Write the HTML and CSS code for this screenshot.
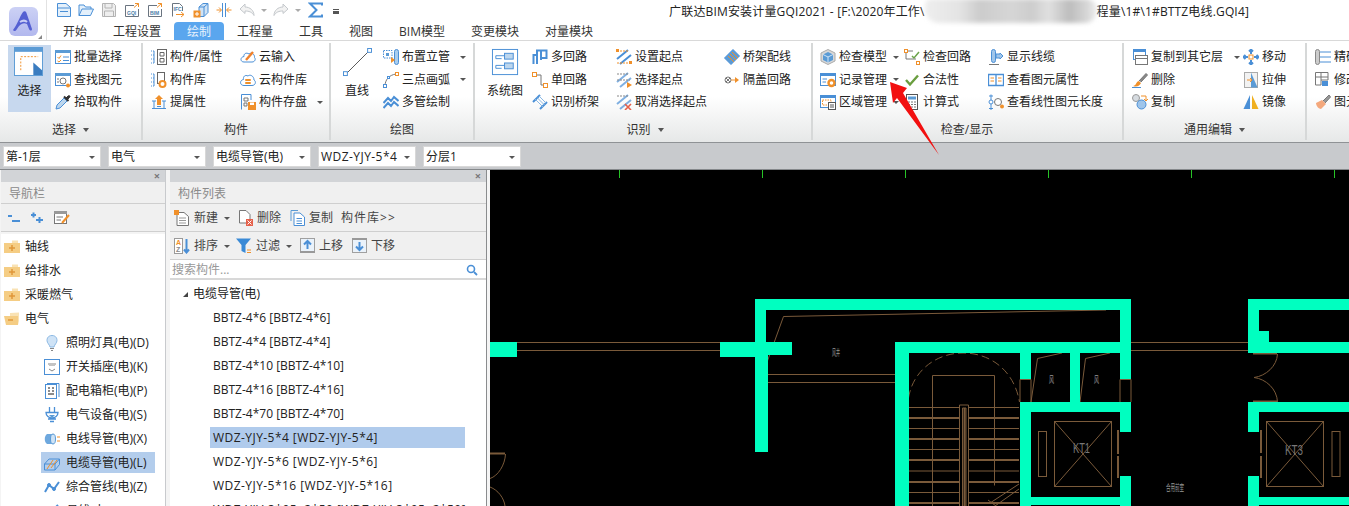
FILE: index.html
```html
<!DOCTYPE html>
<html lang="zh-CN">
<head>
<meta charset="utf-8">
<title>广联达BIM安装计量GQI2021</title>
<link rel="stylesheet" href="styles.css">
</head>
<body>
<header class="top">
  <div class="logo-box">
    <div class="logo"><svg viewBox="0 0 28 28" width="28" height="28"><path d="M4 23 C8 18 11 9 14 5 C15 4 17 4 17.500 6 L23 22 C23 24 21 24 20 22 L18 17 C14 15 11 17 8 22 C7 24 5 25 4 23Z" fill="#5560d2"/><path d="M11 15 C14 13 16 13 18 15" stroke="#c9cdf5" stroke-width="2" fill="none"/></svg></div>
    <i class="grip"></i>
  </div>
  <div class="top-right">
    <div class="qat">
      <svg class="ic q" viewBox="0 0 16 16"><path d="M1.500 1.500H10L14.500 5.500V14.500H1.500Z" fill="#e4f0fb"/><path d="M1.500 6H14.500M4 9.500H12"/></svg>
      <svg class="ic q q-open" viewBox="0 0 16 16"><path d="M1 13.500V3H6L7.500 5H13V7" fill="#e4f0fb"/><path d="M1 13.500L4 7H15.500L12.500 13.500Z" fill="#e4f0fb"/></svg>
      <svg class="ic q q-gap gr" viewBox="0 0 16 16"><path d="M1.500 1.500H12.500L14.500 3.500V14.500H1.500Z" fill="#eee"/><path d="M4 1.500V6H11V1.500M3.500 14.500V9H12.500V14.500"/></svg>
      <svg class="ic q q-gap dk" viewBox="0 0 16 16"><path d="M1.500 3.500H10M1.500 3.500V14.500H14.500V7"/><path class="o" d="M10 5.500L14.500 1.500M11 1.500H14.500V5"/><text x="3" y="12.500" class="tiny">GQI</text></svg>
      <svg class="ic q q-gap dk" viewBox="0 0 16 16"><path d="M1.500 3.500H10M1.500 3.500V14.500H14.500V7"/><path class="o" d="M10 5.500L14.500 1.500M11 1.500H14.500V5"/><text x="3" y="12.500" class="tiny">BIM</text></svg>
      <svg class="ic q q-gap2 dk" viewBox="0 0 16 16"><path d="M2.500 14.500V1.500H9.500L12.500 4.500V9"/><text x="3.500" y="9" class="tiny">IFC</text><path class="o" d="M6 12.500H14M11 10L14 12.500L11 15"/></svg>
      <svg class="ic q q-gap2" viewBox="0 0 16 16"><path d="M6 5L10 1.500H15V10.500L11 14.500H6Z" fill="#cfe3f6"/><path d="M6 5H11V14.500M11 5L15 1.500"/><rect class="of" x="0.500" y="8.500" width="7" height="7"/><path d="M2 12H6M4 10V14" stroke="#fff"/></svg>
      <svg class="ic q q-gap2" viewBox="0 0 16 16"><path d="M9.500 1V15M6.500 1V15" /><path class="o" d="M0.500 8H5M3 5.500L5.500 8L3 10.500M15.500 8H11M13 5.500L10.500 8L13 10.500"/></svg>
      <svg class="ic q q-gap2 lg" viewBox="0 0 16 16"><path d="M6 2L1 7L6 11.500V9C10 9 13 10 15 13.500C15 8.500 11 5 6 5Z" fill="#f2f2f2"/></svg>
      <i class="car car-q"></i>
      <svg class="ic q lg q-redo" viewBox="0 0 16 16"><path d="M10 2L15 7L10 11.500V9C6 9 3 10 1 13.500C1 8.500 5 5 10 5Z" fill="#f2f2f2"/></svg>
      <i class="car car-q"></i>
      <svg class="ic q q-sig" viewBox="0 0 16 16"><path class="fat" d="M14 3.500V1.500H2L8.500 8L2 14.500H14V12.500"/></svg>
      <i class="qmore"></i>
      <h1 class="title">广联达BIM安装计量GQI2021 - [F:\2020年工作\<span class="blur"></span>程量\1#\1#BTTZ电线.GQI4]</h1>
    </div>
    <nav class="tabs">
      <a class="tab">开始</a><a class="tab">工程设置</a><a class="tab tab-on">绘制</a><a class="tab">工程量</a><a class="tab">工具</a><a class="tab">视图</a><a class="tab">BIM模型</a><a class="tab">变更模块</a><a class="tab">对量模块</a>
    </nav>
  </div>
</header>

<section class="ribbon">
  <div class="group g1">
    <div class="gbody">
      <div class="big big-on">
        <svg class="ic big-ic" viewBox="0 0 30 30"><rect x="0.500" y="0.500" width="29" height="29" fill="#fff" stroke="#5b9bd5"/><rect x="0" y="0" width="30" height="5" fill="#5b9bd5" stroke="none"/><path class="o" d="M7 24V10H25" stroke-dasharray="2 1.500"/><path d="M20 16L29 24V29H20Z" fill="#3a7cc0" stroke="none"/></svg>
        <span>选择</span>
      </div>
      <div class="col">
        <div class="it"><svg class="ic" viewBox="0 0 16 16"><rect x="0.500" y="1.500" width="15" height="13" fill="#fff"/><rect x="0" y="1" width="16" height="3" fill="#5b9bd5" stroke="none"/><path class="o" d="M2.500 8L4 9.500L6 6.500M2.500 12L4 13L6 11"/><path d="M8 8H14M8 11.500H14"/></svg><span>批量选择</span></div>
        <div class="it"><svg class="ic" viewBox="0 0 16 16"><rect x="0.500" y="1.500" width="15" height="12" fill="#fff"/><rect x="0" y="1" width="16" height="3" fill="#5b9bd5" stroke="none"/><circle cx="8" cy="9" r="3" stroke="#777"/><circle class="of" cx="13" cy="13.500" r="2"/><path d="M2 7H4M2 10H4" stroke="#777"/></svg><span>查找图元</span></div>
        <div class="it"><svg class="ic" viewBox="0 0 16 16"><path d="M1 15L2 11L9 4L12 7L5 14Z" fill="#bcd6ee"/><path d="M9 2.500L13.500 7" stroke="#333" stroke-width="2"/><path d="M11 4L13 2C15 1 15.500 2.500 14.500 3.500L12.500 5.500" fill="#333" stroke="#333"/></svg><span>拾取构件</span></div>
      </div>
    </div>
    <div class="glabel">选择<i class="car car-l"></i></div>
  </div>

  <div class="group g2">
    <div class="gbody">
      <div class="col c89">
        <div class="it"><svg class="ic" viewBox="0 0 16 16"><path d="M0 2H4M0 6H4M0 10H4M0 14H4" stroke-dasharray="1 1"/><path d="M3 2V14"/><rect x="6.500" y="0.500" width="9" height="15" stroke="#666"/><path d="M9 3.500H13V7H9ZM9 9.500H13V13H9Z" stroke="#666"/></svg><span>构件/属性</span></div>
        <div class="it"><svg class="ic" viewBox="0 0 16 16"><path d="M0 2H4M0 6H4M0 10H4M0 14H4" stroke-dasharray="1 1"/><path d="M3 2V14"/><rect x="6.500" y="0.500" width="7" height="11" stroke="#666"/><circle cx="11.500" cy="12" r="3" stroke="#f0902a" stroke-width="2" fill="#fff"/></svg><span>构件库</span></div>
        <div class="it"><svg class="ic" viewBox="0 0 16 16"><path class="of" d="M8 1L12 5H10V11H6V5H4Z"/><path d="M1 7H5M11 7H15M1 14.500H15M3 7V14.500M13 7V14.500M6 12.500H10"/></svg><span>提属性</span></div>
      </div>
      <div class="col">
        <div class="it"><svg class="ic" viewBox="0 0 16 16"><path d="M4 13H12C15 13 16 10 14.500 8.500C15 5 11 3 9 5C6 3 3.500 5 4 7.500C0 8 0 13 4 13Z"/><path class="o2" d="M6 11L13 3"/></svg><span>云输入</span></div>
        <div class="it"><svg class="ic" viewBox="0 0 16 16"><path d="M4 13.500H12C15.500 13.500 16.500 9.500 14 8C14 4 10 2 8 4C5 2.500 3 4.500 3.500 7.500C-0.500 8 -0.500 13.500 4 13.500Z"/><rect class="of" x="5" y="7" width="6" height="2" rx="1"/><rect class="of" x="5" y="10" width="6" height="2" rx="1"/></svg><span>云构件库</span></div>
        <div class="it"><svg class="ic" viewBox="0 0 16 16"><path d="M1.500 15.500V0.500H11V6"/><path d="M4 4H8V7H4ZM4 9H7V12H4Z" stroke="#777"/><rect class="of" x="8" y="8" width="8" height="8"/><rect x="10" y="8.500" width="4" height="2.500" fill="#fff" stroke="none"/></svg><span>构件存盘</span><i class="car car-m"></i></div>
      </div>
    </div>
    <div class="glabel">构件</div>
  </div>

  <div class="group g3">
    <div class="gbody">
      <div class="big">
        <svg class="ic big-ic" viewBox="0 0 30 30"><path d="M3 27L27 3" stroke="#555"/><rect x="0.500" y="24.500" width="4" height="4" fill="#fff"/><rect x="25.500" y="0.500" width="4" height="4" fill="#fff"/></svg>
        <span>直线</span>
      </div>
      <div class="col">
        <div class="it"><svg class="ic" viewBox="0 0 16 16"><path d="M0.500 1.500H9V9H0.500Z" stroke-dasharray="1.500 1"/><rect x="3" y="4" width="3" height="3" stroke="none" fill="#5b9bd5"/><rect x="11.500" y="0.500" width="4" height="15" rx="2" fill="#a9cdee"/><path class="of" d="M8 8L12 11L8 14Z"/></svg><span>布置立管</span><i class="car car-m"></i></div>
        <div class="it"><svg class="ic" viewBox="0 0 16 16"><path d="M2 14C2 8 6 3 13 2" stroke="#777"/><rect x="0.500" y="12.500" width="3" height="3" fill="#fff"/><rect class="bo" x="12.500" y="0.500" width="3" height="3" fill="#fff"/><rect x="4.500" y="4.500" width="2" height="2" fill="#fff"/></svg><span>三点画弧</span><i class="car car-m"></i></div>
        <div class="it"><svg class="ic fat" viewBox="0 0 16 16"><path d="M0.500 9L5 4L8 7L11 3L15.500 7M0.500 14L5 9L8 12L11 8L15.500 12"/></svg><span>多管绘制</span></div>
      </div>
    </div>
    <div class="glabel">绘图</div>
  </div>

  <div class="group g4">
    <div class="gbody">
      <div class="big big-sys">
        <svg class="ic big-ic" viewBox="0 0 30 30"><rect x="0.500" y="0.500" width="26" height="26" transform="translate(1 1)" fill="#fff"/><rect x="14" y="5.500" width="9" height="6" fill="#bcd6ee"/><rect x="14" y="15.500" width="9" height="6" fill="#bcd6ee"/><path d="M5 8H14M5 18H14M5 8V11H11M5 18V21H11"/></svg>
        <span>系统图</span>
      </div>
      <div class="col c84">
        <div class="it"><svg class="ic" viewBox="0 0 16 16"><path class="fat" d="M1.500 15V6H5V15M5 9V1.500H9V11M9 5V1.500H14.500V9H10"/></svg><span>多回路</span></div>
        <div class="it"><svg class="ic" viewBox="0 0 16 16"><path d="M3 3H9V13H13" stroke="#777"/><rect class="bo" x="0.500" y="0.500" width="4" height="4" fill="#fff"/><rect class="bo" x="11.500" y="11.500" width="4" height="4" fill="#fff"/></svg><span>单回路</span></div>
        <div class="it"><svg class="ic" viewBox="0 0 16 16"><path class="fat" d="M1 8L8 1M8 15L15 8"/><path d="M3 5L11 13M5 3.500L12.500 11M7 2L14 9" stroke="#8ab8e4"/></svg><span>识别桥架</span></div>
      </div>
      <div class="col c108">
        <div class="it"><svg class="ic" viewBox="0 0 16 16"><path class="fat" d="M1 10L12 1M4 15L15 6"/><path d="M1 2H12M1 14H13" class="o" stroke-dasharray="2 1"/><rect class="of" x="0" y="0" width="3" height="3"/><rect class="of" x="13" y="12" width="3" height="3"/></svg><span>设置起点</span></div>
        <div class="it"><svg class="ic" viewBox="0 0 16 16"><path class="fat" d="M1 10L12 1M4 15L15 6" stroke-opacity=".7"/><path d="M1 2H12M1 8L14 8" stroke="#888" stroke-dasharray="2 1"/><path class="of" d="M11 10L16 13L11 16Z"/></svg><span>选择起点</span></div>
        <div class="it"><svg class="ic" viewBox="0 0 16 16"><path class="fat" d="M1 10L12 1M4 15L15 6" stroke-opacity=".7"/><path d="M1 2H12" stroke="#888" stroke-dasharray="2 1"/><path d="M9 10L15 16M15 10L9 16" stroke="#e5604a" stroke-width="1.600"/></svg><span>取消选择起点</span></div>
      </div>
      <div class="col">
        <div class="it"><svg class="ic" viewBox="0 0 16 16"><path d="M0.500 9L9 0.500L15.500 7L7 15.500Z" fill="#5b9bd5"/><path class="o" d="M4 7L10 13M6 5L12 11M8 3L14 9"/></svg><span>桥架配线</span></div>
        <div class="it"><svg class="ic" viewBox="0 0 16 16"><circle cx="4" cy="8" r="3" stroke="#777"/><path d="M2 6L6 10M6 6L2 10" stroke="#777"/><path class="o" d="M7 8H11"/><path class="of" d="M11 5L15 8L11 11Z"/></svg><span>隔盖回路</span></div>
      </div>
    </div>
    <div class="glabel">识别<i class="car car-l"></i></div>
  </div>

  <div class="group g5">
    <div class="gbody">
      <div class="col c84">
        <div class="it"><svg class="ic" viewBox="0 0 16 16"><path d="M8 0.500L15 4V12L8 15.500L1 12V4Z" fill="#d8d8d8" stroke="#aaa"/><path d="M8 3L13 5.500V11L8 13.500L3 11V5.500Z" fill="#5b9bd5" stroke="none"/><path d="M3 5.500L8 8L13 5.500M8 8V13.500" stroke="#cfe3f6"/></svg><span>检查模型</span><i class="car car-s"></i></div>
        <div class="it"><svg class="ic" viewBox="0 0 16 16"><rect x="0.500" y="1.500" width="15" height="12" fill="#fff"/><rect x="0" y="1" width="16" height="3" fill="#4a8fd6" stroke="none"/><path d="M2.500 7H7M2.500 10H6"/><circle cx="11.500" cy="11" r="3" stroke="#f0902a" stroke-width="2.400" fill="#fff"/></svg><span>记录管理</span><i class="car car-s"></i></div>
        <div class="it"><svg class="ic" viewBox="0 0 16 16"><rect x="0.500" y="1.500" width="15" height="12" fill="#fff"/><rect x="0" y="1" width="16" height="3" fill="#4a8fd6" stroke="none"/><path class="o" d="M2.500 6H11V11H2.500Z" stroke-dasharray="1.500 1"/><rect x="8.500" y="8.500" width="7" height="7" fill="#fff" stroke="#555"/><path d="M10 11H14M10 13H14" stroke="#555"/></svg><span>区域管理</span><i class="car car-s"></i></div>
      </div>
      <div class="col c84">
        <div class="it"><svg class="ic" viewBox="0 0 16 16"><rect class="bo" x="0.500" y="0.500" width="3" height="3"/><rect class="bo" x="12.500" y="12.500" width="3" height="3"/><path d="M4 2H9M2 4V10H12" stroke="#777"/><path d="M8 7L10 9L15 3" stroke="#6ba34a" stroke-width="1.500"/></svg><span>检查回路</span></div>
        <div class="it"><svg class="ic" viewBox="0 0 16 16"><path d="M2 8L6 12.500L14 3.500" stroke="#6a9e3f" stroke-width="2.400"/></svg><span>合法性</span></div>
        <div class="it"><svg class="ic" viewBox="0 0 16 16"><rect x="2.500" y="0.500" width="11" height="15" stroke="#555" fill="#fff"/><rect x="4" y="2.500" width="8" height="3" fill="#5b9bd5" stroke="none"/><path d="M4 8H12M4 10.500H12M4 13H12" stroke="#777" stroke-dasharray="2 1"/></svg><span>计算式</span></div>
      </div>
      <div class="col">
        <div class="it"><svg class="ic" viewBox="0 0 16 16"><path d="M1 15.500H11" stroke="#777"/><rect x="3.500" y="0.500" width="4" height="13" rx="2" fill="#9fc5ea"/><path d="M8 5H12V4L15 7L12 10V9H8Z" fill="#9fc5ea"/></svg><span>显示线缆</span></div>
        <div class="it"><svg class="ic" viewBox="0 0 16 16"><path d="M0.500 2.500H15.500V13.500H0.500ZM8 2.500V13.500" stroke-width="1.300" fill="#fff"/><path class="o" d="M2.500 6H6M2.500 9H6M10 6H13.500M10 9H13.500"/></svg><span>查看图元属性</span></div>
        <div class="it"><svg class="ic" viewBox="0 0 16 16"><path d="M3 0.500V16M1 2H5M1 14.500H5"/><circle cx="3" cy="8" r="2" fill="#fff"/><circle cx="10" cy="8" r="3.500" stroke="#777" fill="#fff"/><circle class="of" cx="14" cy="12.500" r="2"/></svg><span>查看线性图元长度</span></div>
      </div>
    </div>
    <div class="glabel">检查/显示</div>
  </div>

  <div class="group g6">
    <div class="gbody">
      <div class="col c111">
        <div class="it"><svg class="ic" viewBox="0 0 16 16"><rect x="1.500" y="0.500" width="12" height="10" fill="#fff"/><rect x="1" y="0" width="13" height="3" fill="#4a8fd6" stroke="none"/><rect x="3.500" y="6.500" width="12" height="9" fill="#fff" stroke="#777"/><path d="M3.500 9.500H15.500" stroke="#777"/></svg><span>复制到其它层</span><i class="car car-c"></i></div>
        <div class="it"><svg class="ic" viewBox="0 0 16 16"><path d="M7 9L14 1.500L15.500 3L9 10" fill="#888" stroke="#777"/><path class="of" d="M1 14C4 14 4 10 6.500 9L9 11C8 13.500 5 15.500 1 14Z"/><path d="M0 15.500H9" stroke-width="1"/></svg><span>删除</span></div>
        <div class="it"><svg class="ic" viewBox="0 0 16 16"><circle cx="4" cy="4" r="3.500" fill="#d6dbe0" stroke="#999"/><circle cx="9.500" cy="10.500" r="4.500" fill="#9fc5ea"/><path d="M9 2H14V6M12 5L14 7L16 5" stroke="#f0902a"/></svg><span>复制</span></div>
      </div>
      <div class="col">
        <div class="it"><svg class="ic" viewBox="0 0 16 16"><rect class="bo" x="6" y="6" width="4" height="4"/><path class="fat" d="M8 5V1M6 2.500L8 0.500L10 2.500M8 11V15M6 13.500L8 15.500L10 13.500M5 8H1M2.500 6L0.500 8L2.500 10M11 8H15M13.500 6L15.500 8L13.500 10"/></svg><span>移动</span></div>
        <div class="it"><svg class="ic" viewBox="0 0 16 16"><rect x="1.500" y="0.500" width="13" height="15" stroke="#aaa" fill="#f2f2f2"/><path d="M8 0.500L14.500 15.500H8Z" fill="#5b9bd5" stroke="none"/><path class="o" d="M4 8H9M7 6L9 8L7 10"/></svg><span>拉伸</span></div>
        <div class="it"><svg class="ic" viewBox="0 0 16 16"><path d="M7 1V15H0.500Z" fill="#4a8fd6" stroke="none"/><path d="M9 1V15H15.500Z" fill="#f0b020" stroke="none"/></svg><span>镜像</span></div>
      </div>
    </div>
    <div class="glabel">通用编辑<i class="car car-l"></i></div>
  </div>

  <div class="group g7">
    <div class="gbody">
      <div class="col">
        <div class="it"><svg class="ic" viewBox="0 0 16 16"><rect x="0.500" y="0.500" width="4" height="15" rx="2" fill="#ccc" stroke="#888"/><path d="M5 3H16M5 8H16M5 13H16"/></svg><span>精确布置</span></div>
        <div class="it"><svg class="ic" viewBox="0 0 16 16"><path d="M0.500 0.500H13V8H6V13H0.500ZM0.500 5H13M6 0.500V8" stroke="#777"/><rect x="7" y="9" width="6" height="5" fill="#4a8fd6" stroke="none"/></svg><span>修改构件</span></div>
        <div class="it"><svg class="ic" viewBox="0 0 16 16"><path d="M8 7L14 1L15.500 3L10 9" fill="#999" stroke="#777"/><path d="M1 9L7 6L11 10L6 15C4 15 1 12 1 9Z" fill="#f4a87c" stroke="none"/></svg><span>图元属性</span></div>
      </div>
    </div>
    <div class="glabel"></div>
  </div>
</section>

<section class="selbar">
  <div class="sel"><span>第-1层</span><i class="car"></i></div>
  <div class="sel"><span>电气</span><i class="car"></i></div>
  <div class="sel"><span>电缆导管(电)</span><i class="car"></i></div>
  <div class="sel"><span class="wd">WDZ-YJY-5*4</span><i class="car"></i></div>
  <div class="sel"><span>分层1</span><i class="car"></i></div>
</section>

<main class="main">
  <aside class="panel nav">
    <div class="pclose"><span>×</span></div>
    <div class="phead">导航栏</div>
    <div class="ptool nav-tool">
      <svg class="ic i12" viewBox="0 0 12 12"><path class="fat" d="M0 4H4M4 9H12"/></svg>
      <svg class="ic i12" viewBox="0 0 12 12"><path class="fat" d="M0 3H5M2.500 0.500V5.500M5 8H12M8.500 5V11"/></svg>
      <svg class="ic" viewBox="0 0 16 16"><rect x="0.500" y="1.500" width="12" height="12" fill="#fff" stroke="#777"/><rect x="0" y="1" width="13" height="3" fill="#999" stroke="none"/><path d="M2.500 7H9M2.500 10H7" stroke="#777"/><path d="M8 13L15 5" stroke="#f0902a" stroke-width="2"/></svg>
    </div>
    <ul class="tree">
      <li class="fold"><svg class="ic f" viewBox="0 0 16 14"><path d="M0 3H16V13H0Z" fill="#f5cd84" stroke="none"/><path d="M8 0.500H14V3H8Z" fill="#f9e2b4" stroke="none"/><path d="M5 8H11M8 5V11" stroke="#e0973a" stroke-width="1.500"/></svg>轴线</li>
      <li class="fold"><svg class="ic f" viewBox="0 0 16 14"><path d="M0 3H16V13H0Z" fill="#f5cd84" stroke="none"/><path d="M8 0.500H14V3H8Z" fill="#f9e2b4" stroke="none"/><path d="M5 8H11M8 5V11" stroke="#e0973a" stroke-width="1.500"/></svg>给排水</li>
      <li class="fold"><svg class="ic f" viewBox="0 0 16 14"><path d="M0 3H16V13H0Z" fill="#f5cd84" stroke="none"/><path d="M8 0.500H14V3H8Z" fill="#f9e2b4" stroke="none"/><path d="M5 8H11M8 5V11" stroke="#e0973a" stroke-width="1.500"/></svg>采暖燃气</li>
      <li class="fold"><svg class="ic f" viewBox="0 0 16 14"><path d="M0 4H14V13H2Z" fill="#f5cd84" stroke="none"/><path d="M6 1L15 0.500V9L14 13V4H6Z" fill="#f9e2b4" stroke="none"/><path d="M4 8H9" stroke="#e0973a" stroke-width="1.500"/></svg>电气</li>
      <li class="sub"><svg class="ic" viewBox="0 0 16 16"><path d="M8 0.500C12 0.500 13 3.500 13 5.500C13 8 10.500 9.500 10 12H6C5.500 9.500 3 8 3 5.500C3 3.500 4 0.500 8 0.500Z" fill="#cfe3f6" stroke="#8ab8e4"/><path d="M6 13.500H10M7 15.500H9" stroke="#888"/></svg>照明灯具(电)(D)</li>
      <li class="sub"><svg class="ic" viewBox="0 0 16 16"><rect x="0.500" y="0.500" width="15" height="15" fill="#fff"/><path d="M6 4V7M8 4V7M10 4V7M4 5H5M11 5H12M5 10L8 12L11 10" stroke="#888"/></svg>开关插座(电)(K)</li>
      <li class="sub"><svg class="ic" viewBox="0 0 16 16"><rect x="1.500" y="1.500" width="11" height="14" fill="#fff"/><path d="M3 0.500H15V14"/><path d="M4 5H6M8 5H10M4 8H6M8 8H10M4 11H10" stroke="#666" stroke-width="1.500"/></svg>配电箱柜(电)(P)</li>
      <li class="sub"><svg class="ic" viewBox="0 0 16 16"><path d="M5.500 0V5M10.500 0V5M2 5.500H14C14 9 11 11 8 11C5 11 2 9 2 5.500ZM4 12H12M6 14.500H10" stroke-width="1.300"/><path d="M5 8H11L8 11Z" fill="#5b9bd5" stroke="none"/></svg>电气设备(电)(S)</li>
      <li class="sub"><svg class="ic" viewBox="0 0 16 16"><path d="M3 3H9C11 5 11 11 9 13H3C0 11 0 5 3 3Z" fill="#6ea8de" stroke="none"/><ellipse cx="9" cy="8" rx="2.500" ry="5" fill="#cfe3f6" stroke="#5b9bd5"/><path class="o" d="M13 6H16M13 10H16"/></svg>电线导管(电)(X)</li>
      <li class="sub sub-on"><svg class="ic" viewBox="0 0 16 16"><path d="M0.500 9H11V15H0.500ZM0.500 9L5 4H15.500L11 9M15.500 4V9.500L11 15"/><path class="o" d="M3 14L9 5M7 13L13 5"/></svg>电缆导管(电)(L)</li>
      <li class="sub"><svg class="ic" viewBox="0 0 16 16"><path class="fat" d="M1 13L5 6L10 10L15 3"/><circle cx="5" cy="6" r="1.500" fill="#4a8fd6"/><circle cx="10" cy="10" r="1.500" fill="#4a8fd6"/></svg>综合管线(电)(Z)</li>
      <li class="sub"><svg class="ic" viewBox="0 0 16 16"><path d="M2 14L14 2" class="fat"/></svg>母线(电)(M)</li>
    </ul>
  </aside>

  <aside class="panel list">
    <div class="pclose"><span>×</span></div>
    <div class="phead">构件列表</div>
    <div class="ptool">
      <span class="tb tb-wide"><svg class="ic" viewBox="0 0 16 16"><path d="M3 2.500H10L14.500 6.500V15.500H3Z" fill="#fff" stroke="#777"/><path d="M5 8H12M5 10.500H12M5 13H12" stroke="#999"/><rect class="of" x="0" y="0" width="5" height="5"/></svg>新建<i class="car"></i></span>
      <span class="tb tb-m9"><svg class="ic" viewBox="0 0 16 16"><path d="M1.500 0.500H8L12 4.500V13H1.500Z" fill="#fff" stroke="#777"/><rect x="8" y="9" width="7" height="7" fill="#e5604a" stroke="none"/><path d="M9.500 10.500L13.500 14.500M13.500 10.500L9.500 14.500" stroke="#fff"/></svg>删除</span>
      <span class="tb"><svg class="ic" viewBox="0 0 16 16"><path d="M1 11V0.500H8" stroke="#5b9bd5"/><path d="M4 3H10L14.500 7V15.500H4Z" fill="#fff"/><path d="M6.500 8.500H12M6.500 11H12M6.500 13.500H12"/></svg>复制</span>
      <span class="tb tb-lib">构件库&gt;&gt;</span>
    </div>
    <div class="ptool">
      <span class="tb tb-wide tb-m6"><svg class="ic" viewBox="0 0 16 16"><rect x="0.500" y="0.500" width="8" height="15" fill="#fff" stroke="#999"/><text x="2" y="7" class="tiny2 torange">A</text><text x="2" y="14" class="tiny2">Z</text><path class="fat" d="M12.500 1V14M10 11.500L12.500 14.500L15 11.500"/></svg>排序<i class="car"></i></span>
      <span class="tb tb-wide"><svg class="ic" viewBox="0 0 16 16"><path d="M0 0.500H15L9.500 7V15L5.500 13V7Z" fill="#3a8ad6" stroke="none"/><path class="o" d="M11 12H15M11 14.500H15"/></svg>过滤<i class="car"></i></span>
      <span class="tb tb-m9"><svg class="ic" viewBox="0 0 16 16"><rect x="0.500" y="0.500" width="14" height="14" fill="#eaf2fa" stroke="#a0a0a0"/><rect x="0" y="13" width="15" height="2" fill="#999" stroke="none"/><path class="fat" d="M7.500 11V3M4 6.500L7.500 3L11 6.500"/></svg>上移</span>
      <span class="tb"><svg class="ic" viewBox="0 0 16 16"><rect x="0.500" y="0.500" width="14" height="14" fill="#eaf2fa" stroke="#a0a0a0"/><rect x="0" y="0" width="15" height="2" fill="#999" stroke="none"/><path class="fat" d="M7.500 4V12M4 8.500L7.500 12L11 8.500"/></svg>下移</span>
    </div>
    <div class="search"><span>搜索构件...</span><svg class="ic i12" viewBox="0 0 12 12"><circle cx="5" cy="5" r="3.500" stroke-width="1.600"/><path d="M8 8L11 11" stroke-width="1.800"/></svg></div>
    <ul class="items">
      <li class="root"><i class="tri"></i>电缆导管(电)</li>
      <li>BBTZ-4*6 [BBTZ-4*6]</li>
      <li>BBTZ-4*4 [BBTZ-4*4]</li>
      <li>BBTZ-4*10 [BBTZ-4*10]</li>
      <li>BBTZ-4*16 [BBTZ-4*16]</li>
      <li>BBTZ-4*70 [BBTZ-4*70]</li>
      <li class="on wd">WDZ-YJY-5*4 [WDZ-YJY-5*4]</li>
      <li class="wd">WDZ-YJY-5*6 [WDZ-YJY-5*6]</li>
      <li class="wd">WDZ-YJY-5*16 [WDZ-YJY-5*16]</li>
      <li class="wd">WDZ-YJV-3*95+2*50 [WDZ-YJV-3*95+2*50]</li>
    </ul>
  </aside>

  <div class="cad">
    <svg class="cad-svg" viewBox="490 170 859 336" width="859" height="336">
      <g class="tick">
        <path d="M619.500 170V178M762.500 170V178M905.500 170V178M1048.500 170V178M1191.500 170V178M1334.500 170V178"/>
      </g>
      <g class="ln">
        <path d="M517 342.500H720M517 350.500H720M1131 342.500H1248M1131 350.500H1248M768 374.500H895M768 382.500H895"/>
        <path d="M766 365L783.500 316.500L1106 310"/>
        <path d="M1031 402L1037.500 358.500L1062 353M1080 402L1085.500 358.500L1110 353"/>
        <path d="M1020 379.500H1031V402M1120 379.500H1131V402M1020 379.500V402M1120 379.500V402"/>
        <rect x="1054.500" y="421.500" width="57" height="65"/>
        <path d="M1054.500 421.500L1111.500 486.500M1111.500 421.500L1054.500 486.500"/>
        <rect x="1038.500" y="431.500" width="8" height="45"/>
        <rect x="1266.500" y="421.500" width="57" height="65"/>
        <path d="M1266.500 421.500L1323.500 486.500M1323.500 421.500L1266.500 486.500"/>
        <rect x="1332" y="431.500" width="8" height="45"/>
        <path class="thick" d="M1118 430V454M1118 456V478M1261 430V453M1261 456V478M1253 353.500H1277M1253 401.500H1277M490 453.500H505"/>
        <path d="M1277.500 354C1277 366 1266 376 1254 377.500C1266 379 1277 389 1277.500 402"/>
        <path d="M505.500 454C505 465 498 476 490 478.500M490 487C498 490 504 498 505 506"/>
        <path d="M932.500 506V375.500H994.500V485.500"/>
        <path d="M908 407.500H959M969 407.500H1019M908 428.500H959M969 428.500H1019M908 449.500H959M969 449.500H1019M908 471H959M969 471H1019M908 492.500H959M969 492.500H1019"/>
        <path class="thick" d="M908 418H959M969 418H1019M908 439H959M969 439H1019M908 460H959M969 460H1019M908 482H959M969 482H1019M908 503H959M969 503H1019"/>
        <path d="M959.500 506V405H968.500V506M962.500 506V408H966V506"/>
        <path class="thick" d="M964.500 408V506"/>
        <path d="M990 503L1019 484M995 506L1019 489M988 500L996 506"/>
        <path class="dash" d="M908.500 398C913 370 937 353 963 353C990 353 1014 370 1019.500 402"/>
      </g>
      <g class="wall">
        <rect x="490" y="342" width="27" height="15"/>
        <rect x="720" y="342" width="36" height="15"/>
        <rect x="755" y="299" width="376" height="11"/>
        <rect x="755" y="299" width="11" height="60"/>
        <rect x="755" y="355" width="13" height="97"/>
        <rect x="755" y="342" width="37" height="13"/>
        <rect x="895" y="342" width="236" height="11"/>
        <rect x="895" y="342" width="14" height="164"/>
        <rect x="1020" y="342" width="11" height="37"/>
        <rect x="1070" y="342" width="10" height="61"/>
        <rect x="1120" y="299" width="11" height="80"/>
        <rect x="1020" y="402" width="111" height="10"/>
        <rect x="1020" y="402" width="11" height="104"/>
        <rect x="1120" y="402" width="11" height="30"/>
        <rect x="1120" y="476" width="11" height="30"/>
        <rect x="1020" y="497" width="111" height="8"/>
        <rect x="1248" y="299" width="101" height="11"/>
        <rect x="1248" y="299" width="11" height="54"/>
        <rect x="1259" y="331" width="10" height="12"/>
        <rect x="1248" y="342" width="101" height="11"/>
        <rect x="1248" y="402" width="101" height="10"/>
        <rect x="1248" y="402" width="11" height="30"/>
        <rect x="1248" y="476" width="11" height="30"/>
        <rect x="1259" y="497" width="90" height="8"/>
      </g>
      <g class="lbl">
        <text x="1073" y="453" class="kt" textLength="17" lengthAdjust="spacingAndGlyphs">KT1</text>
        <text x="1285" y="455" class="kt" textLength="18" lengthAdjust="spacingAndGlyphs">KT3</text>
        <text x="832" y="356" textLength="8" lengthAdjust="spacingAndGlyphs">风井</text>
        <text x="1049" y="383" textLength="5" lengthAdjust="spacingAndGlyphs">风</text>
        <text x="1094" y="383" textLength="5" lengthAdjust="spacingAndGlyphs">风</text>
        <text x="1166" y="491" textLength="18" lengthAdjust="spacingAndGlyphs">合用前室</text>
      </g>
    </svg>
  </div>
</main>

<svg class="arrow" viewBox="0 0 60 80" width="60" height="80"><path d="M1 2L18 8L14 13L50 75L8 18L4 23Z" fill="#f21010"/></svg>
</body>
</html>
```

FILE: styles.css
```css
* { box-sizing: border-box; }
html, body { margin: 0; padding: 0; }
body {
  width: 1349px;
  height: 506px;
  overflow: hidden;
  position: relative;
  background: #fff;
  font: 12px/16px "Open Sans", "Noto Sans CJK SC", "Liberation Sans", sans-serif;
  color: #222;
}
ul { list-style: none; margin: 0; padding: 0; }
i { display: inline-block; font-style: normal; }

/* shared icon styling */
.ic { width: 16px; height: 16px; flex: none; fill: none; stroke: #4a8fd6; stroke-width: 1; overflow: hidden; }
.i12 { width: 12px; height: 12px; }
.gr { stroke: #b4b4b4; }
.lg { stroke: #c4c8cc; }
.dk { stroke: #6a7480; }
.o { stroke: #f0902a; }
.o2 { stroke: #f0802a; stroke-width: 2.400; }
.bo { stroke: #f0902a; }
.of { fill: #f0902a; stroke: none; }
.fat { stroke-width: 2; }
.tiny { font: 700 5px "Liberation Sans", sans-serif; fill: #4a7ea8; stroke: none; }
.tiny2 { font: 700 7px "Liberation Sans", sans-serif; fill: #888; stroke: none; }
.torange { fill: #f0902a; }
.wd { letter-spacing: .45px; }

/* small down triangle */
.car {
  width: 0;
  height: 0;
  border-left: 3px solid transparent;
  border-right: 3px solid transparent;
  border-top: 3px solid #555;
}
.car-m { margin-left: 7px; }
.car-s { margin-left: 3px; }
.car-c { margin-left: 8px; }
.car-l { margin-left: 7px; border-left-width: 3.500px; border-right-width: 3.500px; border-top-width: 4px; }
.car-q { margin-left: 6px; border-top-color: #aaa; }

/* header */
.top { display: flex; height: 41px; border-bottom: 1px solid #d9d9d9; }
.logo-box { width: 47px; position: relative; border-right: 1px solid #e2e2e2; }
.logo {
  position: absolute;
  left: 9px;
  top: 7px;
  width: 29px;
  height: 29px;
  border-radius: 6px;
  background: linear-gradient(#ccd1f5, #b2b8ee);
}
.grip { position: absolute; right: 4px; bottom: 1px; border-left: 4px solid transparent; border-bottom: 4px solid #888; }
.top-right { flex: 1; display: flex; flex-direction: column; }
.qat { height: 21px; padding: 2px 0 0 9px; display: flex; align-items: flex-start; }
.q-open { margin-left: 6px; }
.q-gap { margin-left: 7px; }
.q-gap2 { margin-left: 7px; }
.q-redo { margin-left: 6px; }
.q-sig { margin-left: 7px; }
.qat .car-q { margin-top: 7px; }
.qmore { width: 6px; height: 5px; margin: 7px 0 0 9px; border-top: 1px solid #555; border-bottom: 3px solid #555; }
.title {
  margin: -1px 100px 0 auto;
  font-size: 12px;
  font-weight: 400;
  line-height: 21px;
  letter-spacing: .16px;
  white-space: nowrap;
  display: flex;
}
.blur {
  width: 172px;
  height: 24px;
  margin-top: -2px;
  display: block;
  border-radius: 6px 10px 12px 14px;
  filter: blur(2px);
  background: linear-gradient(90deg, #eee 0, #e4e4e4 20%, #ccc 32%, #d6d6d6 50%, #cdcdcd 62%, #e0e0e0 72%, #bdbdbd 84%, #d6d6d6 94%, #eee 100%);
}
.tabs { display: flex; height: 19px; padding-left: 3px; padding-top: 1px; }
.tab { padding: 0 13px; line-height: 20px; height: 18px; color: #333; white-space: nowrap; overflow: hidden; }
.tab-on { background: #5aa6ee; color: #e8f3fd; border-radius: 4px 4px 0 0; }

/* ribbon */
.ribbon {
  display: flex;
  height: 102px;
  overflow: hidden;
  border-bottom: 1px solid #8f9295;
  background: linear-gradient(#fff 0, #fff 55%, #e6e8e8 100%);
}
.group { flex: none; display: flex; flex-direction: column; margin: 2px 0; border-right: 2px solid #d6d8d8; padding-top: 3px; }
.g1 { width: 143px; padding-left: 8px; }
.g2 { width: 188px; padding-left: 8px; }
.g3 { width: 144px; padding-left: 8px; }
.g4 { width: 338px; padding-left: 12px; }
.g5 { width: 311px; padding-left: 7px; }
.g6 { width: 183px; padding-left: 8px; }
.g7 { width: 60px; padding-left: 8px; border-right: 0; }
.gbody { display: flex; height: 73px; }
.glabel { height: 21px; display: flex; align-items: center; justify-content: center; color: #333; padding-right: 8px; }
.col { display: flex; flex-direction: column; flex: none; }
.c84 { width: 84px; }
.c89 { width: 89px; }
.c108 { width: 108px; }
.c111 { width: 111px; }
.it { height: 22.500px; display: flex; align-items: center; gap: 3px; white-space: nowrap; }
.big { width: 36px; margin-right: 8px; height: 67px; display: flex; flex-direction: column; align-items: center; flex: none; }
.big span { margin-top: 6px; line-height: 16px; }
.big-ic { width: 29px; height: 29px; margin-top: 2px; }
.big-on { width: 43px; margin-right: 4px; margin-top: -1px; background: #c7d8ee; }
.big-on .big-ic { margin-right: 2px; }
.big-on span { margin-top: 7px; }
.big-sys { margin-right: 9px; }

/* selector row */
.selbar { height: 27px; background: #c8cacd; border-bottom: 1px solid #85888b; padding: 3px 0 0 3px; display: flex; gap: 7px; }
.sel {
  width: 98px;
  height: 21px;
  background: #fff;
  border: 1px solid #d8d8d8;
  display: flex;
  align-items: center;
  justify-content: space-between;
  padding: 1px 5px 0 2px;
  white-space: nowrap;
}

/* side panels */
.main { display: flex; height: 336px; background: #f4f4f4; overflow: hidden; }
.panel { flex: none; background: #fff; display: flex; flex-direction: column; border-right: 1px solid #c8cacd; }
.nav { width: 165px; margin-left: 1px; }
.list { width: 317px; margin-left: 4px; border-right-color: #8a8c8e; }
.pclose { height: 12px; background: #d2d4d7; display: flex; justify-content: flex-end; padding-right: 5px; flex: none; }
.pclose span { font-size: 11px; line-height: 12px; color: #777; font-weight: 700; }
.phead { height: 22px; flex: none; padding-left: 8px; line-height: 23px; background: #f0f0f0; color: #8a8a8a; border-bottom: 1px solid #cfcfcf; }
.ptool { height: 28px; flex: none; background: #f0f0f0; border-bottom: 1px solid #cfcfcf; display: flex; align-items: center; padding: 1px 0 0 4px; color: #444; white-space: nowrap; }
.nav-tool { gap: 11px; padding-left: 7px; }
.tb { display: flex; align-items: center; gap: 3px; margin-right: 8px; }
.tb .car { margin-left: 2px; }
.tb-wide { gap: 4px; }
.tb-m9 { margin-right: 9px; }
.tb-m6 { margin-right: 6px; }
.tb-lib { letter-spacing: 1px; }
.search { height: 20px; flex: none; display: flex; align-items: center; justify-content: space-between; padding: 1px 8px 0 2px; color: #999; border-bottom: 2px solid #d8d8d8; }
.tree { padding-top: 1px; border-top: 2px solid #f4f4f4; }
.tree li { height: 24px; display: flex; align-items: center; white-space: nowrap; }
.fold { padding-left: 3px; gap: 5px; }
.fold .f { height: 14px; }
.sub { margin-left: 40px; padding-left: 3px; gap: 6px; width: 114px; }
.tree .sub-on { background: #b3cdec; height: 21px; margin: 1px 0 2px 40px; }
.items li { height: 24px; line-height: 24px; padding-left: 43px; white-space: nowrap; }
.items { padding-top: 2px; }
.items .root { padding-left: 13px; display: flex; align-items: center; gap: 5px; }
.tri { width: 0; height: 0; border-left: 5px solid transparent; border-bottom: 5px solid #444; }
.items .on { background: #b0cbec; height: 21px; line-height: 21px; width: 255px; margin: 1px 0 2px 40px; padding-left: 3px; }

/* drawing canvas */
.cad { width: 859px; height: 336px; margin-left: 3px; background: #000; flex: none; overflow: hidden; }
.cad-svg { display: block; }
.wall rect { fill: #00ffc0; }
.ln { fill: none; stroke: #7a5a3a; stroke-width: 1; }
.thick { stroke-width: 2; }
.dash { stroke-dasharray: 8 4; }
.tick { stroke: #27c427; stroke-width: 1; }
.lbl text { fill: #999; font: 9px "Noto Sans CJK SC", sans-serif; }
.lbl .kt { font: 14px "Liberation Sans", sans-serif; fill: #777; }

/* annotation arrow over the ribbon */
.arrow { position: absolute; left: 889px; top: 80px; }
```
